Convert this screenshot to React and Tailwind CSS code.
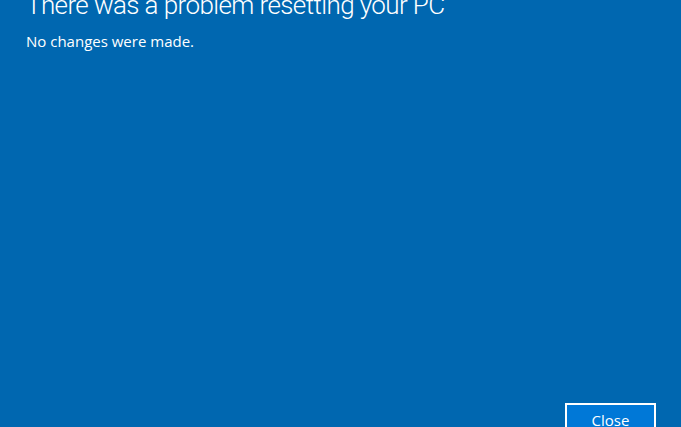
export default function App() {
  return (
    <div
      className="relative flex h-[427px] w-[681px] flex-col overflow-hidden bg-[#0067b0] text-white"
      style={{ fontFamily: '"Open Sans", "Noto Sans", sans-serif' }}
    >
      <div className="pl-[26px]">
        <h1
          className="mt-[-15px] text-[26px] font-light leading-[40px] tracking-[-0.6px] whitespace-nowrap"
          style={{ fontFamily: 'Roboto, "Open Sans", sans-serif' }}
        >
          There was a problem resetting your PC
        </h1>
        <p className="mt-[6px] text-[15px] leading-[20px]">No changes were made.</p>
      </div>
      <div className="mt-auto flex justify-end pr-[25px]">
        <button className="mb-[-12px] h-[36px] w-[91px] border-2 border-white bg-[#0078d7] pb-[3px] text-[15px] leading-[20px] text-white">
          Close
        </button>
      </div>
    </div>
  );
}
